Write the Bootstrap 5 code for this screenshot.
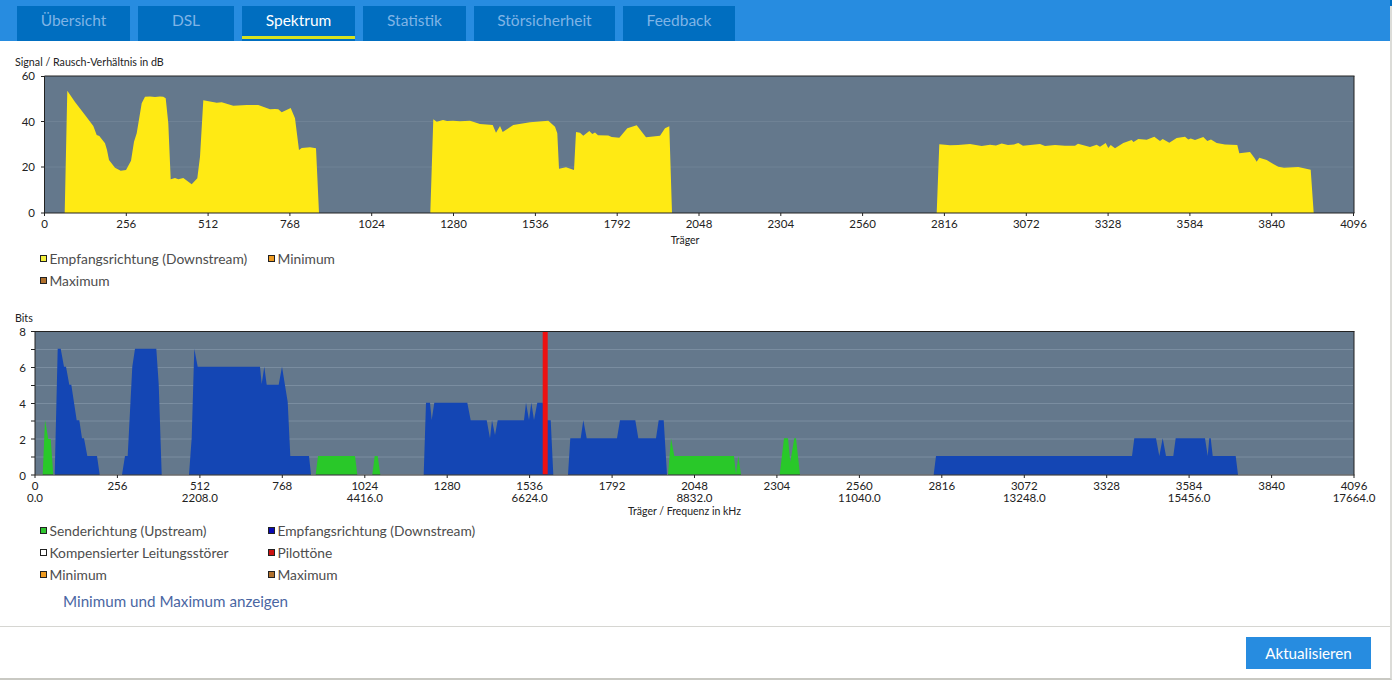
<!DOCTYPE html>
<html lang="de">
<head>
<meta charset="utf-8">
<title>Spektrum</title>
<link rel="stylesheet" href="https://cdn.jsdelivr.net/npm/bootstrap@5.3.0/dist/css/bootstrap.min.css">
<style>
html,body{height:680px;overflow:hidden;background:#fff}
body{font-family:"Lato","Liberation Sans",sans-serif;color:#4d4d4d}
.frame-box{width:1392px;height:680px;border-right:2px solid #dcdcd8;border-bottom:2px solid #c9c9c3;display:flex;flex-direction:column;position:relative}
.frame-box::before{content:"";position:absolute;top:0;right:-2px;width:2px;height:6px;background:#006ec0}
.top-bar{height:41px;background:#278ce0;padding:6px 0 0 17px;gap:8px;flex:none}
.tab-item{background:#006ec0;color:#7fb4e6;height:35px;font-size:15.5px;line-height:29px;text-align:center;text-decoration:none;display:block}
.tab-item.is-on{color:#fff;box-shadow:inset 0 -2px 0 #006ec0,inset 0 -5px 0 #d7e21e}
.w-a{width:113px}.w-b{width:96px}.w-c{width:113px}.w-d{width:103px}.w-e{width:141px}.w-f{width:112px}
.chart-title{font-size:10.7px;line-height:14px;color:#222;padding-left:15px}
.first-section{padding-top:14px}
.second-section{margin-top:19px}
.chart-svg{display:block}
.chart-svg text{font-family:"Lato","Liberation Sans",sans-serif;font-size:11.5px;fill:#222;text-anchor:middle}
.chart-svg text.yl{text-anchor:end}
.chart-svg text.axis-name{font-size:10.5px}
.legend-grid{display:grid;grid-template-columns:228px 228px;padding-left:40px;font-size:13.8px;line-height:22px}
.second-section .legend-grid{margin-top:-1px}
.legend-entry{display:flex;align-items:center}
.swatch{border:1px solid #222;margin-right:2.5px;flex:none;box-sizing:content-box;width:5px;height:5px;margin-top:-2px}
.c-yellow{background:#f4f03c}.c-min{background:#ee9b22}.c-max{background:#b0702c}.c-green{background:#2fc52f}.c-blue{background:#0a0ab4}.c-white{background:#fff}.c-red{background:#cc1111}
.show-link{display:block;padding-left:63px;font-size:15.2px;line-height:22px;color:#4a66a3;text-decoration:none;margin-top:4px}
.foot-bar{margin-top:14px;border-top:1px solid #d6d6d2;padding:10px 19px 0 0;justify-content:flex-end}
.update-btn{width:125px;height:32px;background:#278ce0;color:#fff;border:0;border-radius:0;font-size:15.2px;padding:0}
</style>
</head>
<body>
<div class="frame-box">
<nav class="top-bar d-flex">
<a class="tab-item w-a" href="#">Übersicht</a>
<a class="tab-item w-b" href="#">DSL</a>
<a class="tab-item w-c is-on" href="#">Spektrum</a>
<a class="tab-item w-d" href="#">Statistik</a>
<a class="tab-item w-e" href="#">Störsicherheit</a>
<a class="tab-item w-f" href="#">Feedback</a>
</nav>
<section class="first-section">
<div class="chart-title">Signal / Rausch-Verhältnis in dB</div>
<svg class="chart-svg" width="1390" height="179" viewBox="0 69 1390 179" aria-label="Signal / Rausch-Verhältnis">
<rect x="44.5" y="76" width="1309.5" height="137" fill="#64788c"/>
<path d="M45 121.5H1353M45 167H1353" stroke="#6f8295" stroke-width="1"/>
<g fill="#ffea14">
<polygon points="64.7,213 67.3,90.7 75,102 85,115 93.3,126 96.7,135 99.3,136 105,143.3 107,150 109,160 115,167.7 120.7,170.7 126,170 131,160.7 134,141.7 136.7,133.3 141.7,103.3 145,96.7 150,96.5 155,97 160,96.5 163.3,96.7 165.7,98.3 168.3,123.3 170.7,179.3 175,178 178.3,179.3 183.3,178 191.7,184.3 197.3,178.3 200,156.7 203.3,100.3 216.7,102.7 221.7,102.3 233.3,105.7 246.7,105 258.3,105 270,109.3 275,109 278.3,109.3 281.7,112.3 290.7,108 295,118.3 299,150 301.7,148 310,147.3 316,148.3 319,213"/>
<polygon points="430.3,213 433.3,119.3 436.7,121.7 443,120 447,121 453,120.8 460,121.3 470,120.7 480,124 492.7,125 496,132.7 500,126 502.7,132 513.3,125 530,122.3 548.3,120.7 555,126.7 557.3,133.3 559,168.7 566,167.3 574,170 576,132 580,132.7 583.3,135.7 589.3,131 592.3,134 595,132.5 598,135.3 608.3,135.6 611.7,137 619.3,137.7 627.3,128.3 636.7,125.3 646,137.3 660,135.7 665,128.3 669.3,126.3 672,213"/>
<polygon points="936.7,213 939.3,144.3 945,144.8 950,145.3 958,145 970,144 981.7,146 990,144.8 996,145.5 1001.7,143.5 1008,145 1014,144.5 1018.3,143 1023,145.7 1040,144 1045,146 1055,145 1065,145.7 1075,145.7 1078,143.7 1090,147 1096.7,144.7 1100,146.7 1105.7,143 1108.3,148 1110.7,145 1115,148.3 1123.3,143 1131.7,140 1133.5,142 1138.3,139 1146.7,139.7 1154.3,136.7 1160,141 1162.7,139 1169.3,142.7 1176.7,138 1185,136.7 1188.3,139.5 1190.7,138.5 1195,140 1203.3,137 1207.3,141 1211,139.5 1216.7,143 1225,144.5 1237.3,145 1239.3,153.3 1250,152 1254.3,157.7 1256.7,161.7 1259.3,157.7 1266.7,160 1273.3,164 1278.3,166.7 1284,167.7 1298.3,167 1310.7,169.7 1313.7,213"/>
</g>
<path d="M44.5 76H1354.5M1354 76V213M44.5 76V213M41 213H1354.5" stroke="#222" fill="none"/>
<path d="M41 76.5H44M41 121.5H44M41 167H44M44.5 213v3M126.3 213v3M208.1 213v3M289.9 213v3M371.7 213v3M453.5 213v3M535.4 213v3M617.2 213v3M699 213v3M780.8 213v3M862.6 213v3M944.4 213v3M1026.3 213v3M1108.1 213v3M1189.9 213v3M1271.7 213v3M1353.5 213v3" stroke="#222" fill="none"/>
<text class="yl" x="35" y="80">60</text><text class="yl" x="35" y="126">40</text><text class="yl" x="35" y="171">20</text><text class="yl" x="35" y="217">0</text>
<text x="44.5" y="228">0</text><text x="126.3" y="228">256</text><text x="208.1" y="228">512</text><text x="289.9" y="228">768</text><text x="371.7" y="228">1024</text><text x="453.5" y="228">1280</text><text x="535.4" y="228">1536</text><text x="617.2" y="228">1792</text><text x="699" y="228">2048</text><text x="780.8" y="228">2304</text><text x="862.6" y="228">2560</text><text x="944.4" y="228">2816</text><text x="1026.3" y="228">3072</text><text x="1108.1" y="228">3328</text><text x="1189.9" y="228">3584</text><text x="1271.7" y="228">3840</text><text x="1353.5" y="228">4096</text>
<text class="axis-name" x="685" y="244">Träger</text>
</svg>
<div class="legend-grid">
<div class="legend-entry"><span class="swatch c-yellow"></span>Empfangsrichtung (Downstream)</div>
<div class="legend-entry"><span class="swatch c-min"></span>Minimum</div>
<div class="legend-entry"><span class="swatch c-max"></span>Maximum</div>
</div>
</section>
<section class="second-section">
<div class="chart-title">Bits</div>
<svg class="chart-svg" width="1390" height="196" viewBox="0 325 1390 196" aria-label="Bits">
<rect x="35" y="331.5" width="1319" height="143" fill="#64788c"/>
<path d="M35 349.5H1353M35 367.5H1353M35 385.5H1353M35 403.5H1353M35 421H1353M35 439H1353M35 457H1353" stroke="#7a8da0"/>
<g fill="#29c829">
<polygon points="42.7,474.7 45,420 48.3,439 50.7,439 53.3,474.7"/>
<polygon points="315.7,474.7 318,456 355,456 357.3,474.7"/>
<polygon points="372.3,474.7 374.7,456 377.7,456 380.3,474.7"/>
<polygon points="668,474.7 671,438.3 674.3,456 734,456 736,474 738.3,456 741,474.7"/>
<polygon points="779.7,474.7 784,438.3 788,438.3 790.3,462 794.3,438.3 796,438.3 800,474.7"/>
</g>
<g fill="#1446b4">
<polygon points="54.7,474.7 57.7,348.7 60.7,348.7 64,366.7 66,366.7 69.3,384.7 71.3,384.7 76.7,420.3 79.3,420.3 82,438.3 84,438.3 87.3,456 97,456 99.7,474.7"/>
<polygon points="122,474.7 125,456 127.7,456 132.3,366.7 135,348.7 156.3,348.7 158.7,384 161.7,474.7"/>
<polygon points="189,474.7 191.7,438 194.3,348.7 197.7,366.7 260,366.7 261.7,384 264.3,366.7 266.7,384.7 278.7,384.7 282,366.7 287.7,402 290.3,456 309,456 311,474.7"/>
<polygon points="423.7,474.7 426,402.7 430,402.7 431.7,420 434.3,402.7 467.3,402.7 470.7,420.3 486.7,420.3 490,438.3 492,420.3 495,435 497.7,420.3 524,420.3 526,402.7 529,420 531.3,402.7 534,420 537.3,402.7 542.7,402.7 547.3,420.3 550.7,420.3 553.3,474.7"/>
<polygon points="568,474.7 570.3,438.3 580.7,438.3 583.3,420.3 586.7,438.3 617,438.3 620,420.3 635.3,420.3 638.3,438.3 656,438.3 658.7,420.3 663.7,420.3 667,474.7"/>
<polygon points="933.7,474.7 936,456 1132,456 1134.3,438.3 1156,438.3 1159.3,456 1162.7,438.3 1166,456 1173.3,456 1175.7,438.3 1205,438.3 1207.7,456 1209.3,438.3 1210.7,438.3 1212.7,456 1235.7,456 1238,474.7"/>
</g>
<rect x="542.7" y="331.5" width="5" height="143" fill="#ee1111"/>
<path d="M35 331.5H1354.5M1354 331.5V475M35 331.5V475M31 475H1354.5" stroke="#222" fill="none"/>
<path d="M31 331.5H35M31 349.5H35M31 367.5H35M31 385.5H35M31 403.5H35M31 421H35M31 439H35M31 457H35M35 475v3M117.4 475v3M199.9 475v3M282.3 475v3M364.8 475v3M447.2 475v3M529.6 475v3M612.1 475v3M694.5 475v3M776.9 475v3M859.4 475v3M941.8 475v3M1024.3 475v3M1106.7 475v3M1189.1 475v3M1271.6 475v3M1354 475v3" stroke="#222" fill="none"/>
<text class="yl" x="26" y="336">8</text><text class="yl" x="26" y="372">6</text><text class="yl" x="26" y="408">4</text><text class="yl" x="26" y="444">2</text><text class="yl" x="26" y="480">0</text>
<text x="35" y="490">0</text><text x="117.4" y="490">256</text><text x="199.9" y="490">512</text><text x="282.3" y="490">768</text><text x="364.8" y="490">1024</text><text x="447.2" y="490">1280</text><text x="529.6" y="490">1536</text><text x="612.1" y="490">1792</text><text x="694.5" y="490">2048</text><text x="776.9" y="490">2304</text><text x="859.4" y="490">2560</text><text x="941.8" y="490">2816</text><text x="1024.3" y="490">3072</text><text x="1106.7" y="490">3328</text><text x="1189.1" y="490">3584</text><text x="1271.6" y="490">3840</text><text x="1354" y="490">4096</text>
<text x="35" y="502">0.0</text><text x="199.9" y="502">2208.0</text><text x="364.8" y="502">4416.0</text><text x="529.6" y="502">6624.0</text><text x="694.5" y="502">8832.0</text><text x="859.4" y="502">11040.0</text><text x="1024.3" y="502">13248.0</text><text x="1189.1" y="502">15456.0</text><text x="1354" y="502">17664.0</text>
<text class="axis-name" x="684.5" y="515">Träger / Frequenz in kHz</text>
</svg>
<div class="legend-grid">
<div class="legend-entry"><span class="swatch c-green"></span>Senderichtung (Upstream)</div>
<div class="legend-entry"><span class="swatch c-blue"></span>Empfangsrichtung (Downstream)</div>
<div class="legend-entry"><span class="swatch c-white"></span>Kompensierter Leitungsstörer</div>
<div class="legend-entry"><span class="swatch c-red"></span>Pilottöne</div>
<div class="legend-entry"><span class="swatch c-min"></span>Minimum</div>
<div class="legend-entry"><span class="swatch c-max"></span>Maximum</div>
</div>
<a class="show-link" href="#">Minimum und Maximum anzeigen</a>
</section>
<div class="foot-bar d-flex">
<button class="btn update-btn" type="button">Aktualisieren</button>
</div>
</div>
<script src="https://cdn.jsdelivr.net/npm/bootstrap@5.3.0/dist/js/bootstrap.bundle.min.js"></script>
</body>
</html>
